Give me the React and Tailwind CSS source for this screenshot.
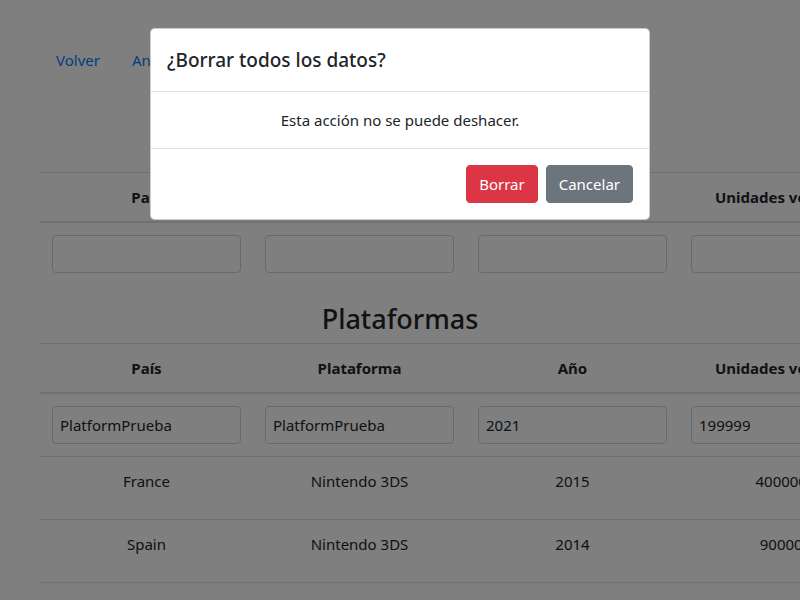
import React from 'react';

const columns = ['País', 'Plataforma', 'Año', 'Unidades vendidas', 'Acciones'];

const rows = [
  { country: 'France', platform: 'Nintendo 3DS', year: 2015, units: 4000000 },
  { country: 'Spain', platform: 'Nintendo 3DS', year: 2014, units: 900000 },
  { country: 'Germany', platform: 'Nintendo 3DS', year: 2016, units: 1200000 },
];

const Input = ({ value = '' }) => (
  <input
    readOnly
    value={value}
    className="block h-[38px] w-full rounded-[4px] border border-[#ced4da] bg-white px-[7px] text-[15px] leading-6 text-[#212529] outline-none"
  />
);

const Btn = ({ children, color }) => (
  <button
    type="button"
    className={`rounded-[4px] border px-3 py-1.5 text-[15px] leading-6 text-white ${
      color === 'red' ? 'border-[#dc3545] bg-[#dc3545]' : color === 'blue' ? 'border-[#007bff] bg-[#007bff]' : 'border-[#6c757d] bg-[#6c757d]'
    }`}
  >
    {children}
  </button>
);

const DataTable = ({ inputs, data = [] }) => (
  <table className="w-[1065px] table-fixed border-collapse text-center">
    <thead>
      <tr>
        {columns.map((c) => (
          <th
            key={c}
            className="w-[213px] border-t border-b-2 border-[#dee2e6] p-3 align-bottom font-bold leading-6"
          >
            {c}
          </th>
        ))}
      </tr>
    </thead>
    <tbody>
      <tr>
        {inputs.map((v, i) => (
          <td key={i} className="border-t border-[#dee2e6] p-3 align-top">
            <Input value={v} />
          </td>
        ))}
        <td className="border-t border-[#dee2e6] p-3 align-top">
          <Btn color="blue">Añadir</Btn>
        </td>
      </tr>
      {data.map((r) => (
        <tr key={r.country}>
          <td className="border-t border-[#dee2e6] p-3 align-top leading-6">{r.country}</td>
          <td className="border-t border-[#dee2e6] p-3 align-top leading-6">{r.platform}</td>
          <td className="border-t border-[#dee2e6] p-3 align-top leading-6">{r.year}</td>
          <td className="border-t border-[#dee2e6] p-3 align-top leading-6">{r.units}</td>
          <td className="border-t border-[#dee2e6] p-3 align-top">
            <div className="flex justify-center gap-1">
              <Btn color="blue">Editar</Btn>
              <Btn color="red">Borrar</Btn>
            </div>
          </td>
        </tr>
      ))}
    </tbody>
  </table>
);

export default function App() {
  return (
    <div className="relative h-[600px] w-[800px] overflow-hidden bg-white font-['Noto_Sans',sans-serif] text-[15px] leading-6 text-[#212529]">
      <div className="ml-10 w-[720px]">
        <nav className="flex pt-10">
          <a className="px-4 py-2 text-[#007bff]">Volver</a>
          <a className="px-4 py-2 text-[#007bff]">Análisis</a>
        </nav>

        <h2 className="mt-[46px] mb-2 text-center text-[27px] font-medium leading-[38px]">Juegos</h2>
        <DataTable inputs={['', '', '', '']} />

        <h2 className="mt-[15px] mb-[5px] text-center text-[27px] font-medium leading-[38px]">Plataformas</h2>
        <DataTable inputs={['PlatformPrueba', 'PlatformPrueba', '2021', '199999']} data={rows} />
      </div>

      {/* fondo del modal */}
      <div className="absolute inset-0 bg-black/50" />

      <div className="absolute left-[150px] top-[28px] w-[500px] rounded-[5px] border border-black/20 bg-white">
        <div className="border-b border-[#dee2e6] p-4">
          <h5 className="text-[19px] font-medium leading-[30px]">¿Borrar todos los datos?</h5>
        </div>
        <div className="p-4 text-center">Esta acción no se puede deshacer.</div>
        <div className="flex items-center justify-end border-t border-[#dee2e6] p-3">
          <div className="m-1">
            <Btn color="red">Borrar</Btn>
          </div>
          <div className="m-1">
            <Btn>Cancelar</Btn>
          </div>
        </div>
      </div>
    </div>
  );
}
